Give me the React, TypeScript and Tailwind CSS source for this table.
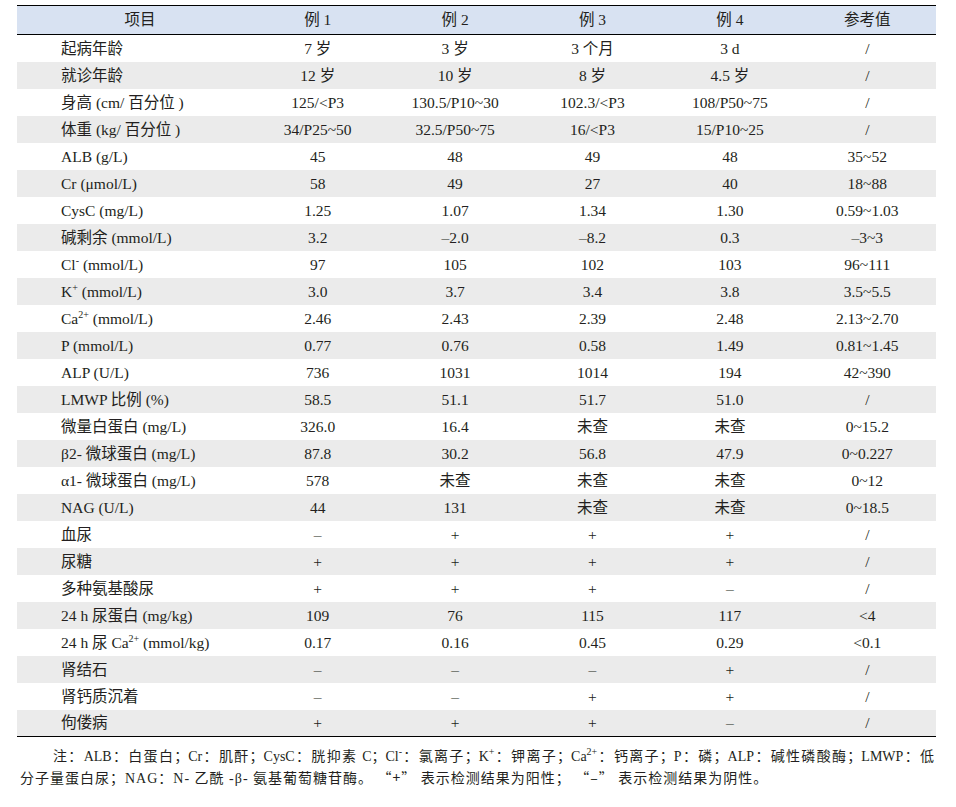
import React from 'react';

type Row = { label: React.ReactNode; cells: string[] };

const sup = (s: string) => <sup className="text-[10px] -top-[6px]">{s}</sup>;
const q = (s: string) => <span style={{ fontFamily: '"Noto Sans CJK SC", sans-serif' }}>{s}</span>;

const rows: Row[] = [
  { label: '起病年龄', cells: ['7 岁', '3 岁', '3 个月', '3 d', '/'] },
  { label: '就诊年龄', cells: ['12 岁', '10 岁', '8 岁', '4.5 岁', '/'] },
  { label: '身高 (cm/ 百分位 )', cells: ['125/<P3', '130.5/P10~30', '102.3/<P3', '108/P50~75', '/'] },
  { label: '体重 (kg/ 百分位 )', cells: ['34/P25~50', '32.5/P50~75', '16/<P3', '15/P10~25', '/'] },
  { label: 'ALB (g/L)', cells: ['45', '48', '49', '48', '35~52'] },
  { label: 'Cr (μmol/L)', cells: ['58', '49', '27', '40', '18~88'] },
  { label: 'CysC (mg/L)', cells: ['1.25', '1.07', '1.34', '1.30', '0.59~1.03'] },
  { label: '碱剩余 (mmol/L)', cells: ['3.2', '–2.0', '–8.2', '0.3', '–3~3'] },
  { label: <>Cl{sup('-')} (mmol/L)</>, cells: ['97', '105', '102', '103', '96~111'] },
  { label: <>K{sup('+')} (mmol/L)</>, cells: ['3.0', '3.7', '3.4', '3.8', '3.5~5.5'] },
  { label: <>Ca{sup('2+')} (mmol/L)</>, cells: ['2.46', '2.43', '2.39', '2.48', '2.13~2.70'] },
  { label: 'P (mmol/L)', cells: ['0.77', '0.76', '0.58', '1.49', '0.81~1.45'] },
  { label: 'ALP (U/L)', cells: ['736', '1031', '1014', '194', '42~390'] },
  { label: 'LMWP 比例 (%)', cells: ['58.5', '51.1', '51.7', '51.0', '/'] },
  { label: '微量白蛋白 (mg/L)', cells: ['326.0', '16.4', '未查', '未查', '0~15.2'] },
  { label: 'β2- 微球蛋白 (mg/L)', cells: ['87.8', '30.2', '56.8', '47.9', '0~0.227'] },
  { label: 'α1- 微球蛋白 (mg/L)', cells: ['578', '未查', '未查', '未查', '0~12'] },
  { label: 'NAG (U/L)', cells: ['44', '131', '未查', '未查', '0~18.5'] },
  { label: '血尿', cells: ['–', '+', '+', '+', '/'] },
  { label: '尿糖', cells: ['+', '+', '+', '+', '/'] },
  { label: '多种氨基酸尿', cells: ['+', '+', '+', '–', '/'] },
  { label: '24 h 尿蛋白 (mg/kg)', cells: ['109', '76', '115', '117', '<4'] },
  { label: <>24 h 尿 Ca{sup('2+')} (mmol/kg)</>, cells: ['0.17', '0.16', '0.45', '0.29', '<0.1'] },
  { label: '肾结石', cells: ['–', '–', '–', '+', '/'] },
  { label: '肾钙质沉着', cells: ['–', '–', '+', '+', '/'] },
  { label: '佝偻病', cells: ['+', '+', '+', '–', '/'] },
];

const heads = ['例 1', '例 2', '例 3', '例 4', '参考值'];

export default function App() {
  return (
    <div
      className="w-[956px] h-[807px] bg-white text-[#231f20] pt-[5px]"
      style={{ fontFamily: '"Liberation Serif", "Noto Sans CJK SC", serif' }}
    >
      <div className="ml-[17px] w-[919px] text-[15.5px]">
        <div className="grid grid-cols-[232px_repeat(5,1fr)] h-[30px] items-center bg-[#d8e2f2] border-t-[1.5px] border-b border-black">
          <div className="text-center pl-[14px]">项目</div>
          {heads.map((h) => (
            <div key={h} className="text-center">{h}</div>
          ))}
        </div>
        {rows.map((r, i) => (
          <div
            key={i}
            className={`grid grid-cols-[232px_repeat(5,1fr)] h-[27px] items-center ${i % 2 === 1 ? 'bg-[#ebebeb]' : 'bg-white'} ${i === rows.length - 1 ? 'border-b-[1.5px] border-black' : ''}`}
          >
            <div className="pl-[44px] whitespace-nowrap">{r.label}</div>
            {r.cells.map((c, j) => (
              <div key={j} className="text-center whitespace-nowrap">{c}</div>
            ))}
          </div>
        ))}
      </div>
      <div className="ml-[20px] w-[914px] mt-[9px] text-[14px] leading-[21px]">
        <p className="pl-[33px] whitespace-nowrap text-justify [text-align-last:justify]">
          注：ALB：白蛋白；Cr：肌酐；CysC：胱抑素 C；Cl{sup('-')}：氯离子；K{sup('+')}：钾离子；Ca{sup('2+')}：钙离子；P：磷；ALP：碱性磷酸酶；LMWP：低
        </p>
        <p className="whitespace-nowrap tracking-[1px]">
          分子量蛋白尿；NAG：N- 乙酰 -β- 氨基葡萄糖苷酶。 {q('“+”')} 表示检测结果为阳性； {q('“–”')} 表示检测结果为阴性。
        </p>
      </div>
    </div>
  );
}
